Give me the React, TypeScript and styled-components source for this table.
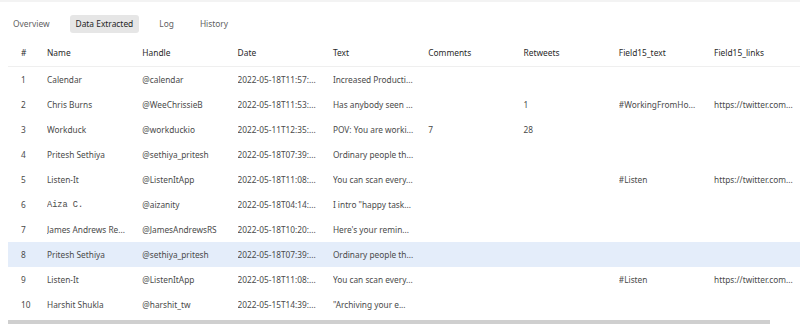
import React from 'react';
import styled, { createGlobalStyle } from 'styled-components';

type Row = {
  id: number;
  name: string;
  handle: string;
  date: string;
  text: string;
  comments?: string;
  retweets?: string;
  tag?: string;
  link?: string;
  mono?: boolean;
};

const COLUMNS = ['#', 'Name', 'Handle', 'Date', 'Text', 'Comments', 'Retweets', 'Field15_text', 'Field15_links'];

// values are shown already clipped, the way the grid cuts them
const ROWS: Row[] = [
  { id: 1, name: 'Calendar', handle: '@calendar', date: '2022-05-18T11:57:...', text: 'Increased Producti...' },
  {
    id: 2,
    name: 'Chris Burns',
    handle: '@WeeChrissieB',
    date: '2022-05-18T11:53:...',
    text: 'Has anybody seen ...',
    retweets: '1',
    tag: '#WorkingFromHo...',
    link: 'https://twitter.com...'
  },
  {
    id: 3,
    name: 'Workduck',
    handle: '@workduckio',
    date: '2022-05-11T12:35:...',
    text: 'POV: You are worki...',
    comments: '7',
    retweets: '28'
  },
  { id: 4, name: 'Pritesh Sethiya', handle: '@sethiya_pritesh', date: '2022-05-18T07:39:...', text: 'Ordinary people th...' },
  {
    id: 5,
    name: 'Listen-It',
    handle: '@ListenItApp',
    date: '2022-05-18T11:08:...',
    text: 'You can scan every...',
    tag: '#Listen',
    link: 'https://twitter.com...'
  },
  { id: 6, name: 'Aiza C.', handle: '@aizanity', date: '2022-05-18T04:14:...', text: 'I intro "happy task...', mono: true },
  { id: 7, name: 'James Andrews Re...', handle: '@JamesAndrewsRS', date: '2022-05-18T10:20:...', text: "Here's your remin..." },
  { id: 8, name: 'Pritesh Sethiya', handle: '@sethiya_pritesh', date: '2022-05-18T07:39:...', text: 'Ordinary people th...' },
  {
    id: 9,
    name: 'Listen-It',
    handle: '@ListenItApp',
    date: '2022-05-18T11:08:...',
    text: 'You can scan every...',
    tag: '#Listen',
    link: 'https://twitter.com...'
  },
  { id: 10, name: 'Harshit Shukla', handle: '@harshit_tw', date: '2022-05-15T14:39:...', text: '"Archiving your e...' }
];

const GlobalStyle = createGlobalStyle`
  body {
    margin: 0;
    background: #fff;
    font-family: 'Noto Sans', 'Open Sans', sans-serif;
  }
`;

const Page = styled.div`
  width: 800px;
  height: 324px;
  overflow: hidden;
  border-top: 2px solid #f3f3f3;
  box-sizing: border-box;
`;

const Tabs = styled.div`
  display: flex;
  gap: 14px;
  padding: 13px 0 0 7px;
  height: 38px;
  box-sizing: border-box;
`;

const Tab = styled.div<{ active?: boolean }>`
  height: 18px;
  line-height: 18px;
  padding: 0 6px;
  border-radius: 3px;
  font-size: 8.4px;
  color: ${(p) => (p.active ? '#1f1f1f' : '#5f5f5f')};
  background: ${(p) => (p.active ? '#e6e6e6' : 'transparent')};
`;

const TableWrap = styled.div`
  margin-left: 8px;
  width: 792px;
  overflow: hidden;
`;

const Grid = styled.div`
  display: grid;
  grid-template-columns: 39px repeat(7, 95.3px) 117px;
  width: 823px;
`;

const HeadRow = styled.div`
  display: contents;
`;

const HeadCell = styled.div<{ first?: boolean }>`
  height: 26px;
  line-height: 26px;
  font-size: 8.4px;
  color: #2a2a2a;
  border-bottom: 1px solid #efefef;
  padding-left: ${(p) => (p.first ? '13px' : '0')};
  white-space: nowrap;
`;

const BodyRow = styled.div<{ selected?: boolean }>`
  display: contents;
  & > div {
    background: ${(p) => (p.selected ? '#e4edfa' : 'transparent')};
  }
`;

const Cell = styled.div<{ first?: boolean; mono?: boolean }>`
  height: 25px;
  line-height: 26px;
  color: #4a4a4a;
  padding-left: ${(p) => (p.first ? '13px' : '0')};
  white-space: nowrap;
  overflow: hidden;
  font-family: ${(p) => (p.mono ? "'Liberation Mono', monospace" : 'inherit')};
  font-size: ${(p) => (p.mono ? '8.6px' : '8.3px')};
`;

const Scrollbar = styled.div`
  margin: 3px 0 0 8px;
  width: 762px;
  height: 4px;
  background: #cfcfcf;
`;

export default function App() {
  return (
    <Page>
      <GlobalStyle />
      <Tabs>
        <Tab>Overview</Tab>
        <Tab active>Data Extracted</Tab>
        <Tab>Log</Tab>
        <Tab>History</Tab>
      </Tabs>
      <TableWrap>
        <Grid>
          <HeadRow>
            {COLUMNS.map((c, i) => (
              <HeadCell key={c} first={i === 0}>
                {c}
              </HeadCell>
            ))}
          </HeadRow>
          {ROWS.map((r) => (
            <BodyRow key={r.id} selected={r.id === 8}>
              <Cell first>{r.id}</Cell>
              <Cell mono={r.mono}>{r.name}</Cell>
              <Cell>{r.handle}</Cell>
              <Cell>{r.date}</Cell>
              <Cell>{r.text}</Cell>
              <Cell>{r.comments}</Cell>
              <Cell>{r.retweets}</Cell>
              <Cell>{r.tag}</Cell>
              <Cell>{r.link}</Cell>
            </BodyRow>
          ))}
        </Grid>
      </TableWrap>
      <Scrollbar />
    </Page>
  );
}
